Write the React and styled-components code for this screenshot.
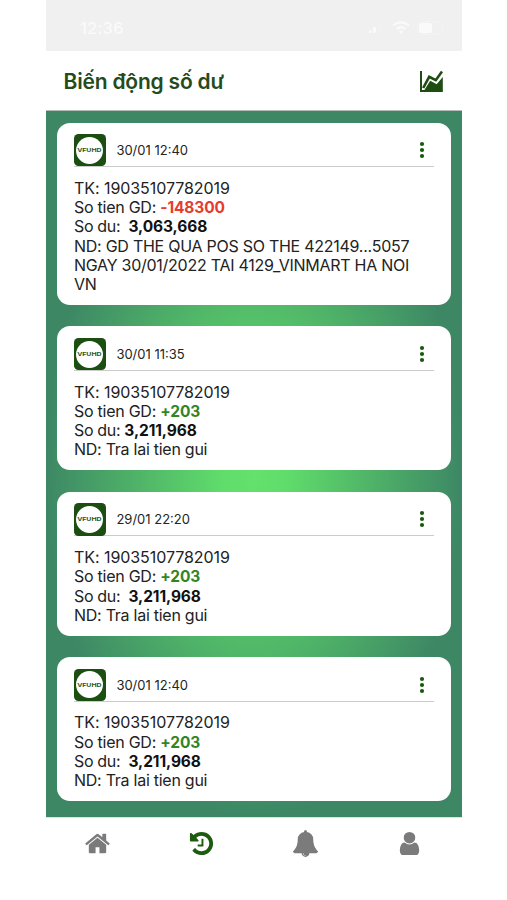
import styled, { createGlobalStyle } from 'styled-components';

const GlobalStyle = createGlobalStyle`
  * { box-sizing: border-box; }
  body {
    margin: 0;
    background: #fff;
    font-family: Inter, "Noto Sans", sans-serif;
  }
`

const Phone = styled.div`
  display: flex;
  flex-direction: column;
  width: 415.5px;
  height: 900px;
  margin-left: 46px;
  overflow: hidden;
`
const StatusBar = styled.div`
  display: flex;
  align-items: center;
  justify-content: space-between;
  height: 51px;
  flex: none;
  padding: 5px 15px 0 34px;
  background: #f0f0f0;
  color: #fafafa;
`
const Clock = styled.span`
  font-size: 16.5px;
  font-weight: 500;
  letter-spacing: 0.2px;
`
const Header = styled.div`
  display: flex;
  align-items: center;
  justify-content: space-between;
  height: 60px;
  flex: none;
  padding: 1px 19px 0 17.5px;
  border-bottom: 1px solid #b5bdb6;
`
const Title = styled.h1`
  margin: 0;
  font-size: 21px;
  font-weight: 600;
  letter-spacing: -0.2px;
  color: #254a1c;
`
const List = styled.div`
  display: flex;
  flex-direction: column;
  gap: 21.7px;
  height: 705.5px;
  flex: none;
  padding: 11.6px 10.5px 0 11px;
  background: radial-gradient(ellipse closest-side at 50% 51%, #64e26b, #60dc6b 16%, #3d8765);
`
const Card = styled.div`
  padding: 11.6px 17px 10.5px;
  border-radius: 13px;
  background: #fff;
`
const CardTop = styled.div`
  display: flex;
  align-items: center;
  height: 33px;
  border-bottom: 1px solid #cbcbcb;
`
const Logo = styled.div`
  display: flex;
  align-items: center;
  justify-content: center;
  width: 32.5px;
  height: 32.5px;
  margin-left: -0.5px;
  flex: none;
  border-radius: 4.5px;
  background: #1c4d11;
`
const LogoCircle = styled.div`
  display: flex;
  align-items: center;
  justify-content: center;
  width: 27px;
  height: 27px;
  flex: none;
  border-radius: 50%;
  background: #fff;
  color: #2b5721;

  span {
    font-size: 5.3px;
    font-weight: 700;
    line-height: 6px;
    transform: scaleX(1.3);
  }
`
const Time = styled.span`
  flex: 1;
  margin-left: 10.4px;
  font-size: 13px;
  color: #242424;
`
const Dots = styled.svg`
  width: 6px;
  height: 18px;
  margin-right: 9.5px;
  fill: #185a0c;
`
const Lines = styled.div`
  padding-top: 11.6px;
  font-size: 16px;
  line-height: 19.25px;
  color: #222;
`
const Line = styled.div`
  white-space: pre;
  letter-spacing: ${props => props.$track || -0.26}px;
`
const Amount = styled.b`
  font-size: 15.5px;
  font-weight: 700;
  letter-spacing: -0.1px;
  color: ${props => props.color || '#111'};
`
const Nav = styled.div`
  display: grid;
  grid-template-columns: repeat(4, 1fr);
  justify-items: center;
  padding-top: 12px;
  border-top: 1px solid #d8e4de;
`
const NavIcon = styled.svg`
  width: 27px;
  height: 27px;
  fill: ${props => props.$active ? '#1d5c10' : '#7b7b7b'};
`

const items = [
  {
    time: '30/01 12:40', amount: '-148300', color: '#e63b30', space: '  ', balance: '3,063,668',
    note: ['ND: GD THE QUA POS SO THE 422149...5057', 'NGAY 30/01/2022 TAI 4129_VINMART HA NOI', 'VN'],
  },
  { time: '30/01 11:35', amount: '+203', color: '#32851f', space: ' ', balance: '3,211,968', note: ['ND: Tra lai tien gui'] },
  { time: '29/01 22:20', amount: '+203', color: '#32851f', space: '  ', balance: '3,211,968', note: ['ND: Tra lai tien gui'] },
  { time: '30/01 12:40', amount: '+203', color: '#32851f', space: '  ', balance: '3,211,968', note: ['ND: Tra lai tien gui'] },
]

const navIcons = [
  'M1472 992v480q0 26-19 45t-45 19h-384v-384h-256v384h-384q-26 0-45-19t-19-45v-480q0-1 .5-3t.5-3l575-474 575 474q1 2 1 6zm223-69l-62 74q-8 9-21 11h-3q-13 0-21-7l-692-577-692 577q-12 8-24 7-13-2-21-11l-62-74q-8-10-7-23.5t11-21.5l719-599q32-26 76-26t76 26l244 204v-195q0-14 9-23t23-9h192q14 0 23 9t9 23v408l219 182q10 8 11 21.5t-7 23.5z',
  'M1664 896q0 156-61 298t-164 245-245 164-298 61q-172 0-327-72.5t-264-204.5q-7-10-6.5-22.5t8.5-20.5l137-138q10-9 25-9 16 2 23 12 73 95 179 147t225 52q104 0 198.5-40.5t163.5-109.5 109.5-163.5 40.5-198.5-40.5-198.5-109.5-163.5-163.5-109.5-198.5-40.5q-98 0-188 35.5t-160 101.5l137 138q31 30 14 69-17 40-59 40h-448q-26 0-45-19t-19-45v-448q0-42 40-59 39-17 69 14l130 129q107-101 244.5-156.5t284.5-55.5q156 0 298 61t245 164 164 245 61 298zm-640-288v448q0 14-9 23t-23 9h-320q-14 0-23-9t-9-23v-64q0-14 9-23t23-9h224v-352q0-14 9-23t23-9h64q14 0 23 9t9 23z',
  'M912 1696q0-16-16-16-59 0-101.5-42.5t-42.5-101.5q0-16-16-16t-16 16q0 73 51.5 124.5t124.5 51.5q16 0 16-16zm816-288q0 52-38 90t-90 38h-448q0 106-75 181t-181 75-181-75-75-181h-448q-52 0-90-38t-38-90q50-42 91-88t85-119.5 74.5-158.5 50-206 19.5-260q0-152 117-282.5t307-158.5q-8-19-8-39 0-40 28-68t68-28 68 28 28 68q0 20-8 39 190 28 307 158.5t117 282.5q0 139 19.5 260t50 206 74.5 158.5 85 119.5 91 88z',
  'M1536 1399q0 109-62.5 187t-150.5 78h-854q-88 0-150.5-78t-62.5-187q0-85 8.5-160.5t31.5-152 58.5-131 94-89 134.5-34.5q131 128 313 128t313-128q76 0 134.5 34.5t94 89 58.5 131 31.5 152 8.5 160.5zm-256-887q0 159-112.5 271.5t-271.5 112.5-271.5-112.5-112.5-271.5 112.5-271.5 271.5-112.5 271.5 112.5 112.5 271.5z',
]

function StatusIcons(){
  return(
    <svg width="80" height="16" viewBox="0 0 80 16" fill="#fafafa">
      <rect x="2" y="10" width="2.5" height="3" rx="1" />
      <rect x="6" y="7" width="3" height="6" rx="1" />
      <rect x="11" y="5" width="3" height="8" rx="1" opacity="0.3" />
      <g fill="none" stroke="#fafafa" strokeWidth="2.2">
        <path d="M26 5.500q8-6.500 16 0" />
        <path d="M29.500 9q4.500-3.800 9 0" />
      </g>
      <path d="M31.500 11.500q2.500-2 5 0l-2.500 2.300z" />
      <rect x="52" y="3" width="13" height="10" rx="2.500" />
      <rect x="50.500" y="1.500" width="25" height="13" rx="3.500" fill="none" stroke="#fafafa" opacity="0.25" />
    </svg>
  )
}

function ChartIcon(){
  return(
    <svg width="23" height="21" viewBox="0 0 23 21">
      <path d="M1 0v20h21.500" fill="none" stroke="#1d4d13" strokeWidth="2" />
      <path d="M3.200 17L9.200 5.800L15.800 9.200L22 0.500" fill="none" stroke="#1d4d13" strokeWidth="2.600" />
      <path d="M3.800 20L10.200 9.800L16.700 13.200L22.800 6V20.800H3.800z" fill="#1d4d13" />
    </svg>
  )
}

function Transaction(props){
  let { item } = props
  return(
    <Card>
      <CardTop>
        <Logo><LogoCircle><span>VFUHD</span></LogoCircle></Logo>
        <Time>{item.time}</Time>
        <Dots viewBox="0 0 6 18">
          <circle cx="3" cy="3" r="2.1" />
          <circle cx="3" cy="9" r="2.1" />
          <circle cx="3" cy="15" r="2.1" />
        </Dots>
      </CardTop>
      <Lines>
        <Line $track={-0.06}>TK: 19035107782019</Line>
        <Line>So tien GD: <Amount color={item.color}>{item.amount}</Amount></Line>
        <Line $track={-0.34}>So du:{item.space}<Amount>{item.balance}</Amount></Line>
        {item.note.map((text, i) => <Line key={i}>{text}</Line>)}
      </Lines>
    </Card>
  )
}

function App(){
  return(
    <>
      <GlobalStyle />
      <Phone>
        <StatusBar>
          <Clock>12:36</Clock>
          <StatusIcons />
        </StatusBar>
        <Header>
          <Title>Biến động số dư</Title>
          <ChartIcon />
        </Header>
        <List>
          {items.map((item, i) => <Transaction key={i} item={item} />)}
        </List>
        <Nav>
          {navIcons.map((d, i) => (
            <NavIcon key={i} $active={i == 1} viewBox="0 0 1792 1792"><path d={d} /></NavIcon>
          ))}
        </Nav>
      </Phone>
    </>
  )
}
export default App;
